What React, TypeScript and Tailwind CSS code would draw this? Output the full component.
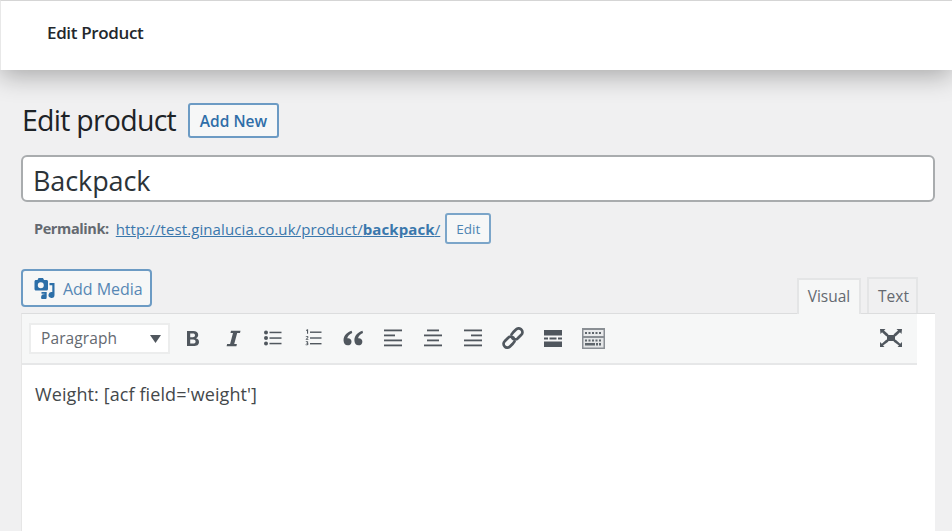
import React from "react";

const ic = "#50575e";

function Bold() {
  return <svg width="14" height="17" viewBox="0 0 14 17"><path fill={ic} fillRule="evenodd" d="M1 1h6.200c3 0 5 1.200 5 3.900 0 1.600-.9 2.800-2.300 3.300 1.900.4 3.100 1.700 3.100 3.700 0 2.900-2.200 4.100-5.400 4.100H1V1zm3.200 2.500v3.700h2.600c1.400 0 2.200-.6 2.200-1.900 0-1.200-.8-1.800-2.200-1.800H4.200zm0 6.100v4h3c1.500 0 2.400-.6 2.400-2 0-1.300-.9-2-2.400-2h-3z" /></svg>;
}
function Italic() {
  return <svg width="15" height="17" viewBox="0 0 15 17"><path fill={ic} d="M5 .8h9.500l-.5 2.200h-2.800L8.200 14h2.700l-.5 2.200H.6l.5-2.200h3L7 3H4.500z" /></svg>;
}
function Bullets() {
  return <svg width="18" height="16" viewBox="0 0 18 16"><g fill={ic}><circle cx="2" cy="2.500" r="2" /><circle cx="2" cy="8" r="2" /><circle cx="2" cy="13.500" r="2" /><rect x="5.500" y="1.700" width="12" height="1.500" /><rect x="5.500" y="7.300" width="12" height="1.500" /><rect x="5.500" y="12.800" width="12" height="1.500" /></g></svg>;
}
function Numbers() {
  return <svg width="17" height="18" viewBox="0 0 17 18"><g fill={ic}><rect x="5" y="2.500" width="11.500" height="1.400" /><rect x="5" y="8.300" width="11.500" height="1.400" /><rect x="5" y="14" width="11.500" height="1.400" /><path d="M1 1l1.500-.7h.6v4.500H2V1.600L1 2zM.7 10.300l1.500-1.500c.4-.4.4-1.100-.2-1.100-.4 0-.8.200-1.100.5l-.2-.7c.4-.3.900-.5 1.500-.5 1 0 1.500.7 1.100 1.700l-1.200 1.200h1.300v.9H.7zM.7 12.500c.9-.4 2.600-.4 2.600.6 0 .4-.2.700-.6.900.5.100.8.500.8 1 0 1.300-2 1.500-3 1l.2-.7c.6.300 1.600.3 1.600-.3 0-.4-.5-.5-1.100-.5v-.7c.6 0 1-.1 1-.5 0-.5-1-.4-1.400-.2z" /></g></svg>;
}
function Quote() {
  return <svg width="20" height="16" viewBox="0 0 19 15"><path fill={ic} fillRule="evenodd" d="M8.200.6C4.500 1.700.5 4.800.5 9.700c0 3 1.600 4.800 3.900 4.800 2.100 0 3.700-1.500 3.700-3.500 0-2-1.400-3.300-3.300-3.300-.3 0-.6 0-.8.100.4-1.900 2.200-3.900 4.800-5zM18.500.6c-3.700 1.100-7.700 4.200-7.700 9.100 0 3 1.600 4.800 3.900 4.800 2.100 0 3.700-1.500 3.700-3.500 0-2-1.400-3.300-3.300-3.300-.3 0-.6 0-.8.100.4-1.900 2.200-3.900 4.800-5z" /></svg>;
}
function Align({ rows }: { rows: [number, number][] }) {
  return (
    <svg width="18" height="18" viewBox="0 0 18 18">
      {rows.map(([x, w], i) => (
        <rect key={i} x={x} y={0.5 + i * 5} width={w} height="1.800" fill={ic} />
      ))}
    </svg>
  );
}
function LinkIcon() {
  return <svg width="22" height="22" viewBox="0 0 22 22" fill="none" stroke={ic} strokeWidth="2.700" strokeLinecap="round"><path d="M9.500 7.500l2-2.500 2.500-2.500a3.600 3.600 0 0 1 5.300 0 3.600 3.600 0 0 1 0 5.300L15.800 11.300a3.600 3.600 0 0 1-5.300 0" /><path d="M12.500 14.500l-2 2.500-2.500 2.500a3.600 3.600 0 0 1-5.300 0 3.600 3.600 0 0 1 0-5.300l3.500-3.500a3.600 3.600 0 0 1 5.300 0" /></svg>;
}
function More() {
  return <svg width="18" height="17" viewBox="0 0 18 17"><g fill={ic}><rect x="0" y="0" width="18" height="5.500" /><rect x="0" y="11.500" width="18" height="5.500" /><rect x="0" y="7.500" width="4" height="2" /><rect x="5.500" y="7.500" width="7" height="2" /><rect x="14" y="7.500" width="4" height="2" /></g></svg>;
}
function Kitchen() {
  return (
    <svg width="23" height="21" viewBox="0 0 23 21">
      <rect x="0" y="0" width="23" height="21" fill="#8a8f94" />
      <rect x="1.500" y="2" width="20" height="6" fill="#e9eaeb" />
      <rect x="1.500" y="10" width="20" height="9.500" fill="#e4e6e7" />
      <g fill="#5f666c">
        <rect x="3" y="4" width="2" height="2" /><rect x="6.500" y="4" width="2" height="2" /><rect x="10" y="4" width="2" height="2" /><rect x="13.500" y="4" width="2" height="2" /><rect x="17" y="4" width="2" height="2" />
        <rect x="3" y="11.500" width="2" height="2" /><rect x="6.500" y="11.500" width="2" height="2" /><rect x="10" y="11.500" width="2" height="2" /><rect x="13.500" y="11.500" width="2" height="2" /><rect x="17" y="11.500" width="2" height="2" />
        <rect x="3" y="15" width="10" height="2.500" /><rect x="14" y="15" width="2" height="2.500" /><rect x="17" y="15" width="2" height="2.500" />
      </g>
    </svg>
  );
}
function Fullscreen() {
  return (
    <svg width="22" height="18" viewBox="0 0 22 18" fill={ic}>
      <rect x="7" y="6" width="8" height="6" />
      <path d="M0 0h5.500L4 1.500 8.500 5.500 6.500 7.500 2 3.200.5 5z" />
      <path d="M22 0h-5.500L18 1.500 13.500 5.500l2 2L20 3.200 21.500 5z" />
      <path d="M0 18h4.500L3 16.500l5.500-4L6.500 10.500 1.800 14.700 0 13z" />
      <path d="M22 18h-4.500l1.500-1.500-5.500-4 2-2 4.700 4.200L22 13z" />
    </svg>
  );
}
function MediaIcon() {
  return (
    <svg width="22" height="22" viewBox="0 0 22 22" className="shrink-0">
      <path fill="#2c6fa8" fillRule="evenodd" d="M3 3h1.500L5.500 1h4.500l1 2h2.500c.9 0 1.500.6 1.500 1.500V12c0 .9-.6 1.500-1.500 1.500H3c-.9 0-1.500-.6-1.500-1.500V4.500C1.500 3.600 2.100 3 3 3zm4.800 2.200a3 3 0 1 0 0 6 3 3 0 0 0 0-6z" />
      <path fill="#2c6fa8" d="M16.500 6H21.500v12a3 3 0 1 1-2.200-2.900V8.200h-2.800zM8.500 15h5.200v5a2.800 2.800 0 1 1-2.200-2.700V16.800h-3z" />
    </svg>
  );
}

function Tool({ children, w = "w-10" }: { children: React.ReactNode; w?: string }) {
  return <div className={`${w} h-[30px] flex items-center justify-center`}>{children}</div>;
}

export default function App() {
  return (
    <div className="w-[952px] h-[531px] overflow-hidden bg-[#f0f0f1] font-['Open_Sans','Noto_Sans',sans-serif] text-[#1d2327]">
      <header className="h-[70px] bg-white border-t border-t-[#d5d5d5] border-l border-l-[#e8e8e8] shadow-[0_6px_26px_rgba(0,0,0,0.3)] flex items-center pl-[46px] pb-[6px]">
        <span className="text-[17px] font-semibold leading-none tracking-[-0.35px] text-[#23282d]">Edit Product</span>
      </header>
      <main className="pl-[21px] pr-[17px]">
        <div className="flex items-center pt-[33px] h-[85px] pb-[17px]">
          <h1 className="text-[28.500px] leading-none tracking-[-0.75px] font-normal ml-px text-[#1d2327]">Edit product</h1>
          <button className="ml-[12px] w-[91px] h-[35px] rounded-[3px] border-2 border-[#6c9bc4] bg-[#f6f7f7] text-[#2f6ea8] text-[15.500px] font-semibold tracking-[0px] pt-[2px]">Add New</button>
        </div>
        <div className="h-[47px] bg-white border-2 border-[#a9acae] rounded-[6px] flex items-center pl-[10px] pt-[5px] text-[27px] tracking-[-0.1px] text-[#2c3338]">Backpack</div>
        <div className="flex items-center h-[31px] mt-[11px] pl-[13px] text-[15px] tracking-[0.1px]">
          <span className="font-bold text-[#646970] text-[14.500px] tracking-[-0.4px] pt-px">Permalink:</span>
          <a className="ml-[7px] text-[#3a77ac] underline pt-px">http://test.ginalucia.co.uk/product/<b className="font-bold">backpack</b>/</a>
          <button className="ml-[5px] w-[46px] h-[31px] rounded-[3px] border-2 border-[#7ba5c9] bg-[#f6f7f7] text-[#4d84b3] text-[13.500px] tracking-normal pt-px">Edit</button>
        </div>
        <div className="flex items-end justify-between h-[69px] pr-[17px]">
          <button className="mb-[6px] w-[131px] h-[38px] rounded-[4px] border-2 border-[#6c9bc4] bg-[#f6f7f7] flex items-center pl-[10px] gap-[8px] text-[#5687b4] text-[16px] tracking-[-0.05px]">
            <MediaIcon />
            <span className="pt-px">Add Media</span>
          </button>
          <div className="flex gap-[6px] items-end">
            <div className="w-[64px] h-[36px] border-2 border-b-0 border-[#e4e5e6] bg-[#f6f7f7] flex items-center justify-center text-[15.500px] text-[#646970] -mb-px z-10 relative">Visual</div>
            <div className="w-[51px] h-[36px] border-2 border-b-0 border-[#e4e5e6] bg-[#f0f0f1] flex items-center justify-center pl-[2px] pt-px text-[15.500px] text-[#646970]">Text</div>
          </div>
        </div>
        <div className="h-[300px] bg-white border-t border-[#dcddde] border-l border-l-[#e6e6e6]">
          <div className="w-[895px] h-[51px] bg-[#f6f7f7] border-b-2 border-b-[#e6e7e8] flex items-center pl-[7px] pb-px">
            <div className="w-[141px] h-[31px] bg-white border-2 border-[#eceded] flex items-center justify-between pl-[10px] pr-[7px] pt-[2px] text-[15.500px] text-[#646970]">
              <span className="tracking-[0.1px]">Paragraph</span>
              <svg width="11" height="8" viewBox="0 0 11 8"><path fill={ic} d="M0 0h11L5.500 8z" /></svg>
            </div>
            <div className="flex items-center ml-[3px]">
              <Tool><Bold /></Tool>
              <Tool><Italic /></Tool>
              <Tool><Bullets /></Tool>
              <Tool><Numbers /></Tool>
              <Tool><Quote /></Tool>
              <Tool><Align rows={[[0, 18], [0, 11], [0, 18], [0, 18]]} /></Tool>
              <Tool><Align rows={[[3, 12], [0, 18], [3, 12], [0, 18]]} /></Tool>
              <Tool><Align rows={[[0, 18], [7, 11], [0, 18], [0, 18]]} /></Tool>
              <Tool><LinkIcon /></Tool>
              <Tool><More /></Tool>
              <Tool><Kitchen /></Tool>
            </div>
            <div className="ml-auto mr-[15px]"><Fullscreen /></div>
          </div>
          <p className="pl-[13px] pt-[16px] text-[18px] leading-[26px] tracking-[0.1px] text-[#44484b]">Weight: [acf field='weight']</p>
        </div>
      </main>
    </div>
  );
}
